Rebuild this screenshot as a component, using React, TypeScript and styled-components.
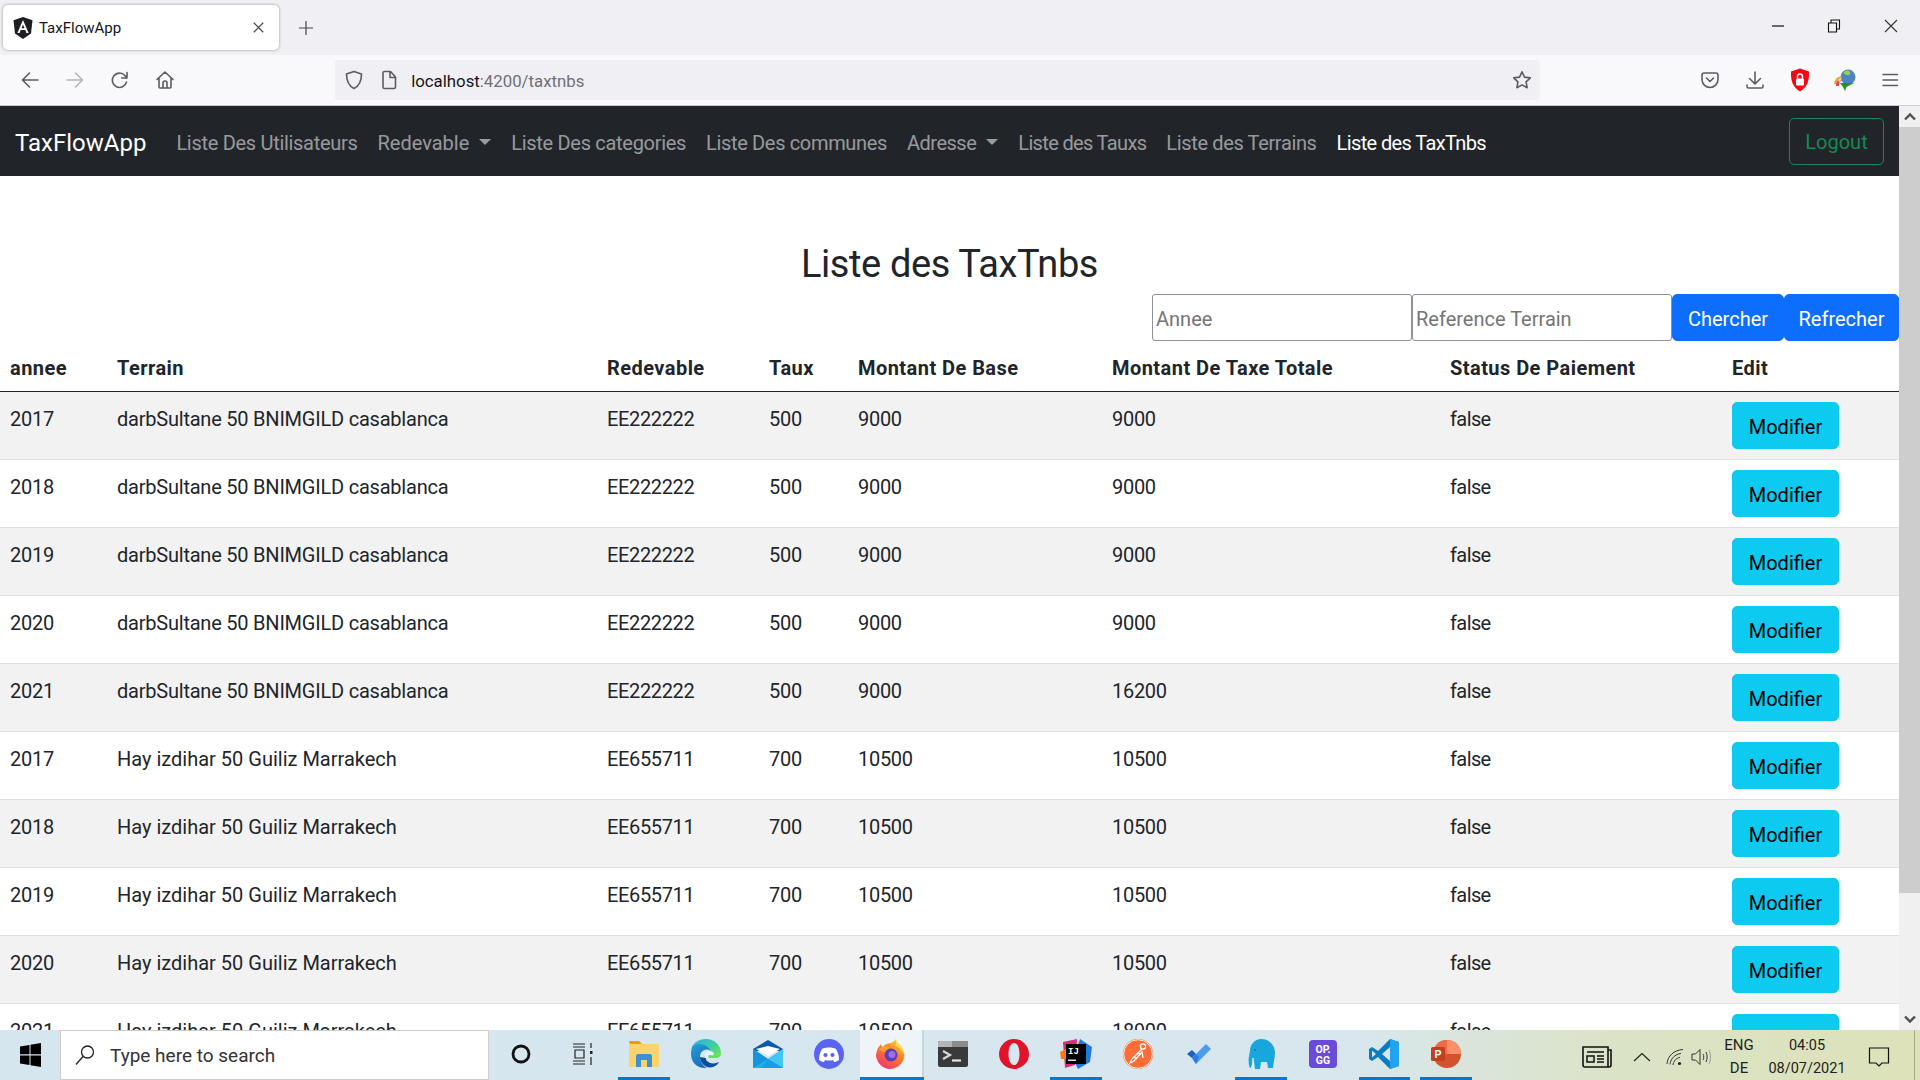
import React from "react";
import styled, { createGlobalStyle } from "styled-components";

const Global = createGlobalStyle`
  html, body { margin: 0; padding: 0; height: 100%; overflow: hidden; background: #fff; }
  body { font-family: Roboto, "Open Sans", "Liberation Sans", sans-serif; color: #212529; }
  * { box-sizing: border-box; }
`;

const Screen = styled.div`
  width: 1920px; height: 1080px; display: flex; flex-direction: column; overflow: hidden;
`;
const TabStrip = styled.div`
  height: 55px; flex: none; background: #f0f0f4; display: flex; align-items: flex-start; padding: 5px 0 0 3px;
`;
const Tab = styled.div`
  width: 276px; height: 45px; background: #fff; border-radius: 5px; box-shadow: 0 0 3px rgba(0,0,0,.4);
  display: flex; align-items: center; padding: 0 15px 0 10px; gap: 6px; font-size: 15px; color: #15141a;
`;
const TabTitle = styled.span` flex: 1; `;
const NewTab = styled.div`
  width: 36px; height: 45px; margin-left: 9px; display: flex; align-items: center; justify-content: center;
`;
const WindowControls = styled.div` margin-left: auto; display: flex; margin-top: -5px; margin-right: 1px; `;
const WindowButton = styled.div`
  width: 56.5px; height: 52px; display: flex; align-items: center; justify-content: center;
`;
const Toolbar = styled.div`
  height: 51px; flex: none; background: #f9f9fb; border-bottom: 1px solid #ccc; display: flex; align-items: center; padding: 0 8px 1px;
`;
const ToolGroup = styled.div` display: flex; `;
const ToolButton = styled.div`
  width: 44.8px; height: 40px; display: flex; align-items: center; justify-content: center;
`;
const UrlBar = styled.div`
  width: 1206px; height: 40px; margin: 0 148px; background: #f0f0f4; border-radius: 4px;
  display: flex; align-items: center; padding: 0 8px 0 9px; font-size: 16.8px;
`;
const UrlIcon = styled.div` width: 20px; height: 20px; margin-right: 15px; display: flex; `;
const UrlText = styled.div` flex: 1; margin-left: -3px; padding-top: 2px; color: #15141a; `;
const UrlDim = styled.span` color: #6f6f76; `;

const Body = styled.div` flex: 1; min-height: 0; display: flex; `;
const Page = styled.div` flex: 1; min-width: 0; overflow: hidden; `;
const Navbar = styled.nav`
  height: 70px; background: #212529; display: flex; align-items: center; padding: 0 15px;
`;
const Brand = styled.div` font-size: 24px; color: #fff; margin-right: 20px; padding-top: 3px; `;
const NavLink = styled.div<{ $active?: boolean; $ls: number }>`
  font-size: 20px; padding: 3px 10px 0; white-space: nowrap; letter-spacing: ${p => p.$ls}px;
  color: ${p => (p.$active ? "#fff" : "rgba(255,255,255,.55)")};
`;
const Caret = styled.span`
  display: inline-block; margin-left: 10px; vertical-align: 5px;
  border-top: 6px solid rgba(255,255,255,.55); border-left: 6px solid transparent; border-right: 6px solid transparent;
`;
const Logout = styled.button`
  margin-left: auto; height: 47px; width: 95px; background: transparent; border: 1px solid #198754; border-radius: 5px;
  color: #198754; font: inherit; font-size: 20px; padding: 2px 0 0;
`;
const Title = styled.h1`
  margin: 0; padding-top: 64px; height: 118px; text-align: center; font-size: 38px; font-weight: 400; line-height: 48px; letter-spacing: -0.4px;
`;
const SearchForm = styled.form` display: flex; justify-content: flex-end; `;
const SearchInput = styled.input`
  width: 260px; height: 47px; border: 1px solid #8f8f9d; border-radius: 3px; padding: 2px 3px 0;
  font: inherit; font-size: 20px; color: #212529; background: #fff;
  &::placeholder { color: #757575; opacity: 1; }
`;
const SearchButton = styled.button<{ $w: number }>`
  width: ${p => p.$w}px; height: 47px; background: #0d6efd; color: #fff; border: 1px solid #0d6efd; border-radius: 5px;
  font: inherit; font-size: 20px; padding: 2px 0 0;
`;
const Table = styled.table`
  width: 1899px; table-layout: fixed; border-collapse: separate; border-spacing: 0;
`;
const Col = styled.col<{ $w: number }>` width: ${p => p.$w}px; `;
const Th = styled.th`
  height: 51px; padding: 12px 10px 8px; font-size: 20px; line-height: 30px; font-weight: 700; text-align: left; vertical-align: bottom;
  border-bottom: 1px solid #212529; color: #212529; letter-spacing: 0.45px;
`;
const Row = styled.tr<{ $odd: boolean }>`
  background: ${p => (p.$odd ? "#f2f2f2" : "#fff")};
`;
const Td = styled.td<{ $ls: number }>`
  padding: 12px 10px 8px; font-size: 20px; line-height: 30px; vertical-align: top; border-bottom: 1px solid #dee2e6; color: #212529;
  white-space: nowrap; letter-spacing: ${p => p.$ls}px;
`;
const EditCell = styled.td`
  padding: 10px; vertical-align: top; border-bottom: 1px solid #dee2e6;
`;
const EditButton = styled.button`
  display: block; width: 107px; height: 47px; background: #0dcaf0; border: 1px solid #0dcaf0; border-radius: 5px;
  color: #000; font: inherit; font-size: 20px; padding: 2px 0 0;
`;
const Scrollbar = styled.div` width: 21px; flex: none; background: #f0f0f0; display: flex; flex-direction: column; `;
const ScrollArrow = styled.div`
  height: 21px; flex: none; display: flex; align-items: center; justify-content: center;
`;
const ScrollThumb = styled.div` height: 766px; background: #cdcdcd; flex: none; `;
const ScrollTrack = styled.div` flex: 1; `;

const Taskbar = styled.div`
  height: 50px; flex: none; display: flex; align-items: stretch;
  background: linear-gradient(90deg, #d6e6ee 0%, #d8e7ee 70%, #dbe3c6 84%, #dde2b9 100%);
`;
const StartButton = styled.div` width: 60px; display: flex; align-items: center; justify-content: center; `;
const SearchBox = styled.div`
  width: 429px; background: #fff; border: 1px solid #ccc; display: flex; align-items: center;
  padding-left: 14px; gap: 15px; font-size: 19px; color: #333;
`;
const Apps = styled.div` display: flex; padding-left: 1px; `;
const AppButton = styled.div<{ $open?: boolean; $active?: boolean }>`
  width: 61.7px; display: flex; align-items: center; justify-content: center; padding-bottom: 2px; position: relative;
  background: ${p => (p.$active ? "#eef4f7" : "transparent")};
  &::before {
    content: ""; position: absolute; top: 0; bottom: 0; right: -2px; width: 2px; background: #c5d8e2;
    display: ${p => (p.$active ? "block" : "none")};
  }
  &::after {
    content: ""; position: absolute; bottom: 0; height: 3px; background: #0078d4;
    left: ${p => (p.$active ? "0" : "5px")}; right: ${p => (p.$active ? "-2px" : "5px")};
    display: ${p => (p.$open || p.$active ? "block" : "none")};
  }
`;
const TraySpacer = styled.div` flex: 1; `;
const TrayItem = styled.div<{ $w: number; $size?: number }>`
  width: ${p => p.$w}px; display: flex; flex-direction: column; align-items: center; justify-content: center;
  font-size: ${p => p.$size ?? 15}px; line-height: 23px; color: #222; padding-top: 3px;
`;
const ShowDesktop = styled.div`
  width: 15px; position: relative;
  &::before { content: ""; position: absolute; left: 9px; top: 0; bottom: 0; width: 1px; background: #a8a88e; }
`;

const st = { fill: "none", stroke: "#5b5b66", strokeWidth: 1.6, strokeLinecap: "round", strokeLinejoin: "round" } as const;

const AngularIcon = () => (
  <svg width="20" height="22" viewBox="0 0 20 22">
    <path d="M10 0 19.5 3.3 18 16.5 10 22 2 16.5.5 3.3Z" fill="#1d1d22" />
    <path d="M10 3 4.4 16h2.2l1.1-2.9h4.6l1.1 2.9h2.2ZM8.5 11.2 10 7.4l1.5 3.8Z" fill="#fff" />
  </svg>
);
const Back = () => (
  <svg width="20" height="20" viewBox="0 0 20 20"><path d="M18 10H2.5M9.5 3 2.500 10l7 7" {...st} /></svg>
);
const Forward = () => (
  <svg width="20" height="20" viewBox="0 0 20 20"><path d="M2 10h15.500M10.500 3l7 7-7 7" {...st} stroke="#b4b4ba" /></svg>
);
const Reload = () => (
  <svg width="20" height="20" viewBox="0 0 20 20"><path d="M16.500 12a7.200 7.200 0 1 1-1.600-6.500L17 8M17 2.500V8h-5.200" {...st} /></svg>
);
const Home = () => (
  <svg width="20" height="20" viewBox="0 0 20 20"><path d="M2 9.500 10 2l8 7.500M4 8v9a1 1 0 0 0 1 1h10a1 1 0 0 0 1-1V8M8 18v-5a2 2 0 0 1 4 0v5" {...st} /></svg>
);
const Shield = () => (
  <svg width="20" height="20" viewBox="0 0 20 20"><path d="M10 1.500 17.500 4c0 7-1.500 11.500-7.500 14.500C4 15.500 2.500 11 2.500 4Z" {...st} /></svg>
);
const PageIcon = () => (
  <svg width="20" height="20" viewBox="0 0 20 20"><path d="M4 3a1.500 1.500 0 0 1 1.500-1.500h6L16.500 7v10a1.500 1.500 0 0 1-1.500 1.500H5.500A1.500 1.500 0 0 1 4 17ZM11 2v5.500h5.500" {...st} /></svg>
);
const Star = () => (
  <svg width="20" height="20" viewBox="0 0 20 20"><path d="m10 1.800 2.500 5.300 5.800.8-4.200 4 1 5.800-5.100-2.800-5.100 2.800 1-5.800-4.200-4 5.800-.8Z" {...st} /></svg>
);
const Pocket = () => (
  <svg width="20" height="20" viewBox="0 0 20 20"><path d="M2 5a2 2 0 0 1 2-2h12a2 2 0 0 1 2 2v4.500a8 8 0 0 1-16 0ZM6.500 8l3.500 3.500L13.500 8" {...st} /></svg>
);
const Download = () => (
  <svg width="20" height="20" viewBox="0 0 20 20"><path d="M10 2v12M4.500 8.500 10 14l5.500-5.500M2 15v1.500a1.500 1.500 0 0 0 1.500 1.500h13a1.500 1.500 0 0 0 1.500-1.500V15" {...st} /></svg>
);
const RedShield = () => (
  <svg width="20" height="24" viewBox="0 0 20 24">
    <path d="M10 .5 19 3.500c.4 9-1.500 15.500-9 20C2.500 19 .6 12.500 1 3.500Z" fill="#ef0a16" />
    <rect x="6" y="10.500" width="8" height="7" rx="1" fill="#fff" />
    <path d="M7.500 10.500V8.500a2.500 2.500 0 0 1 5 0v2" fill="none" stroke="#fff" strokeWidth="1.400" />
  </svg>
);
const Idm = () => (
  <svg width="22" height="22" viewBox="0 0 22 22">
    <circle cx="14" cy="8" r="7.500" fill="#4a86bd" />
    <path d="M10 3c2-2 5-2 6 0s-1 4-3 3-4-1-3-3Z" fill="#9ccc5a" />
    <path d="M0 15c1-6 5-9 9-7-3 0-5 3-4.500 7Z" fill="#e8a23a" />
    <path d="M2 17c0-4 3-7 6-6-2 1-3 3-3 6Z" fill="#d94a4a" />
    <path d="M4 11c1-1 2-2 4-2-1 1-2 3-2 5Z" fill="#f4e36a" />
    <path d="M6 14h14l-7.500 4-1.500 4-2-4Z" fill="#2f8f25" />
  </svg>
);
const Menu = () => (
  <svg width="20" height="20" viewBox="0 0 20 20"><path d="M3 4.500h14.500M3 10h14.500M3 15.500h14.500" {...st} /></svg>
);
const Close = ({ s = 14, c = "#333", w = 1.1 }: { s?: number; c?: string; w?: number }) => (
  <svg width={s} height={s} viewBox="0 0 14 14"><path d="m1 1 12 12M13 1 1 13" fill="none" stroke={c} strokeWidth={w} /></svg>
);
const Plus = () => (
  <svg width="16" height="16" viewBox="0 0 16 16"><path d="M8 1v14M1 8h14" fill="none" stroke="#45454d" strokeWidth="1.200" /></svg>
);
const Minimize = () => (
  <svg width="14" height="14" viewBox="0 0 14 14"><path d="M1 7h12" stroke="#111" strokeWidth="1.200" /></svg>
);
const Restore = () => (
  <svg width="14" height="14" viewBox="0 0 14 14"><path d="M1.500 4h8v9h-8ZM4 4V1h8.500v9H9.500" fill="none" stroke="#111" strokeWidth="1.100" /></svg>
);
const Chevron = ({ up }: { up?: boolean }) => (
  <svg width="12" height="9" viewBox="0 0 12 9">
    <path d={up ? "M1 7.500 6 2.500l5 5" : "M1 1.500l5 5 5-5"} fill="none" stroke="#505050" strokeWidth="2.400" />
  </svg>
);

const WinLogo = () => (
  <svg width="21" height="24" viewBox="0 0 21 24"><path d="M0 3.500 9.500 2v9.300H0ZM10.500 1.800 21 0v11.300H10.500ZM0 12.500h9.500V22L0 20.500ZM10.500 12.500H21V24l-10.500-1.800Z" fill="#000" /></svg>
);
const SearchGlass = () => (
  <svg width="20" height="22" viewBox="0 0 20 22"><circle cx="12.500" cy="8" r="6" fill="none" stroke="#222" strokeWidth="1.300" /><path d="M8 12.500 1 20.500" stroke="#222" strokeWidth="1.400" /></svg>
);
const Cortana = () => (
  <svg width="22" height="22" viewBox="0 0 22 22"><circle cx="11" cy="11" r="8" fill="none" stroke="#111" strokeWidth="2.800" /></svg>
);
const TaskView = () => (
  <svg width="22" height="24" viewBox="0 0 22 24" fill="none" stroke="#222" strokeWidth="1.200">
    <path d="M1 2h12M1 5h12M3 8h9v8H3ZM1 19h12M1 22h12" />
    <rect x="18" y="9" width="2.500" height="3" fill="#222" stroke="none" />
    <path d="M19 1v5M19 15v8" />
  </svg>
);
const FolderApp = () => (
  <svg width="30" height="28" viewBox="0 0 30 28">
    <path d="M0 2a1 1 0 0 1 1-1h9l3 3H1Z" fill="#e0a100" />
    <path d="M0 4h29a1 1 0 0 1 1 1v21a1 1 0 0 1-1 1H1a1 1 0 0 1-1-1Z" fill="#fcd36a" />
    <path d="M7 27V16a2 2 0 0 1 2-2h12a2 2 0 0 1 2 2v11h-5v-7h-6v7Z" fill="#3d8fd1" />
  </svg>
);
const EdgeApp = () => (
  <svg width="30" height="30" viewBox="0 0 30 30">
    <defs>
      <linearGradient id="edgeA" x1="0.200" y1="0" x2="1" y2="0.700"><stop offset="0" stopColor="#2fb4dc" /><stop offset=".6" stopColor="#3ecfa0" /><stop offset="1" stopColor="#6be05a" /></linearGradient>
      <linearGradient id="edgeB" x1="0" y1="0" x2="0.600" y2="1"><stop offset="0" stopColor="#27a0d8" /><stop offset="1" stopColor="#1668b8" /></linearGradient>
    </defs>
    <path d="M15 0C23 0 30 6 30 14c0 3-2 5-5 5h-7l-2-5h3c0-4-4-6-8-5C6 10 2 9 1 8 3 3 9 0 15 0Z" fill="url(#edgeA)" />
    <path d="M1 8c3-3 8-4 12-2 3 1 5 3 6 5-5-2-10 1-10 7 0 5 3 9 7 11C7 30 0 24 0 15c0-2 .3-5 1-7Z" fill="url(#edgeB)" />
    <path d="M9 18c0 7 7 12 13 10 3-1 5-3 6-5-4 2-9 2-12-1-1-1-1-2-1-3Z" fill="#0c4f9e" />
    <path d="M14 18c0-4 2-6 5-6 2 0 4 1 4 3s-3 1-4 1c-2 0-3 2-2 4-1 0-3-1-3-2Z" fill="#e4f1f6" />
  </svg>
);
const MailApp = () => (
  <svg width="30" height="28" viewBox="0 0 30 28">
    <path d="M0 9 15 0l15 9v2H0Z" fill="#0b5aa8" />
    <path d="M3 9 15 6l12 3-12 7Z" fill="#fff" />
    <path d="M0 9 15 19 30 9v19H0Z" fill="#23b1ec" />
    <path d="M0 28V9l15 10Z" fill="#1494dc" />
    <path d="M30 28V9L15 19l-8 9Z" fill="#43c6f4" />
    <path d="M7 28l8-9 15 9Z" fill="#1a9de2" />
  </svg>
);
const DiscordApp = () => (
  <svg width="30" height="30" viewBox="0 0 30 30">
    <circle cx="15" cy="15" r="15" fill="#5865f2" />
    <path d="M8 10c3-2 11-2 14 0 2 3 3 7 3 11-2 1-3 2-5 2l-1-2c-2 .8-6 .8-8 0l-1 2c-2 0-3-1-5-2 0-4 1-8 3-11Z" fill="#fff" />
    <circle cx="11.500" cy="16" r="2.100" fill="#5865f2" /><circle cx="18.500" cy="16" r="2.100" fill="#5865f2" />
  </svg>
);
const FirefoxApp = () => (
  <svg width="30" height="30" viewBox="0 0 30 30">
    <defs>
      <linearGradient id="ffA" x1="0.800" y1="0" x2="0.200" y2="1"><stop offset="0" stopColor="#ffd43a" /><stop offset=".45" stopColor="#ff7a1f" /><stop offset="1" stopColor="#f0317c" /></linearGradient>
    </defs>
    <path d="M2 9 5 5c0 2 1 3 2 3 2-3 5-4 8-4 3-1 4-3 5-4 0 3 2 4 5 7 3 4 4 9 3 12-2 7-8 11-14 11C7 30 1 24 0 17c0-3 1-6 2-8Z" fill="url(#ffA)" />
    <path d="M20 0c0 3 2 5 5 7 2 3 3 5 3 8-2-4-5-7-9-8 1-2 1-5 1-7Z" fill="#ffdf50" />
    <circle cx="15" cy="16" r="6.500" fill="#5b3fb5" />
    <circle cx="16" cy="15.500" r="3.500" fill="#9a6fe8" />
    <path d="M3 10c3-3 9-3 11-1-2 0-4 2-5 4-2 0-5-1-6-3Z" fill="#ffa02e" />
  </svg>
);
const TerminalApp = () => (
  <svg width="30" height="26" viewBox="0 0 30 26">
    <rect width="30" height="26" rx="2" fill="#3a3a3a" />
    <path d="M0 2a2 2 0 0 1 2-2h12v6H0Z" fill="#b5b5b5" />
    <path d="M14 0h14a2 2 0 0 1 2 2v4H14Z" fill="#8b8b8b" />
    <path d="m5 10 7 4-7 4" fill="none" stroke="#d9d9d9" strokeWidth="2.200" />
    <path d="M14 19.500h9" stroke="#e5e5e5" strokeWidth="2.200" />
  </svg>
);
const OperaApp = () => (
  <svg width="30" height="30" viewBox="0 0 30 30">
    <path fillRule="evenodd" d="M15 0a15 15 0 1 0 0 30 15 15 0 0 0 0-30Zm0 4c3.500 0 5.500 5 5.500 11S18.500 26 15 26s-5.500-5-5.500-11S11.500 4 15 4Z" fill="#e0132b" />
  </svg>
);
const IdeaApp = () => (
  <svg width="32" height="30" viewBox="0 0 32 30">
    <path d="M3 3 17 0l-2 26L5 29Z" fill="#dd2a7b" />
    <path d="M20 0l12 8-2 15-12 7-5-10Z" fill="#1f7ae0" />
    <path d="M0 13l6-3v10H1Z" fill="#f97a12" />
    <rect x="6" y="5" width="20" height="20" fill="#000" />
    <text x="8" y="15" fontSize="9" fontWeight="700" fill="#fff" fontFamily="'Liberation Mono', monospace">IJ</text>
    <rect x="8" y="20.500" width="8" height="1.500" fill="#ddd" />
  </svg>
);
const PostmanApp = () => (
  <svg width="30" height="30" viewBox="0 0 30 30">
    <circle cx="15" cy="15" r="15" fill="#ff6c37" />
    <circle cx="15" cy="15" r="14.300" fill="none" stroke="#ffe8dc" strokeWidth="1" />
    <circle cx="20" cy="7.500" r="2.600" fill="none" stroke="#fff" strokeWidth="1.300" />
    <path d="M19 10 9 20l-2 4 4-2 8-9 1 6M14 14l4 1M11 18l3 2" fill="none" stroke="#fff" strokeWidth="1.300" />
  </svg>
);
const TodoApp = () => (
  <svg width="24" height="20" viewBox="0 0 24 20">
    <path d="M0 10 5 6l4 4-4 4Z" fill="#1d5fc0" />
    <path d="M5 14 19 0l5 5L9 20Z" fill="#4c9bef" />
    <path d="M5 14l4-4 3 3-3 7Z" fill="#2f7be0" />
  </svg>
);
const MysqlApp = () => (
  <svg width="28" height="30" viewBox="0 0 28 30">
    <path d="M3 12C3 5 8 0 14 0c8 0 14 6 14 14 0 6-2 10-2 15h-5l-1-6h-6l-1 7H8l-1-8c-2 2-3 6-3 7 -1 0-2-1-2-3-1-5 0-9 1-14Z" fill="#18a6dc" />
    <path d="M6 19v8" stroke="#dff3fb" strokeWidth="1.500" />
    <circle cx="8" cy="11" r="1" fill="#0d6f97" />
  </svg>
);
const OpggApp = () => (
  <svg width="28" height="28" viewBox="0 0 28 28">
    <rect width="28" height="28" rx="4" fill="#6a4bd8" />
    <text x="14" y="13" textAnchor="middle" fontSize="10.500" fontWeight="700" fill="#fff" fontFamily="Roboto, sans-serif">OP.</text>
    <text x="14" y="24" textAnchor="middle" fontSize="10.500" fontWeight="700" fill="#fff" fontFamily="Roboto, sans-serif">GG</text>
  </svg>
);
const VsCodeApp = () => (
  <svg width="30" height="30" viewBox="0 0 30 30">
    <path d="M21 0 9 12 3 8 0 10v10l3 2 6-4 12 12 9-3V3Z" fill="#0a7cc2" />
    <path d="M21 0l9 3v24l-9 3Z" fill="#22a3ee" />
    <path d="M21 8v14l-8-7Z" fill="#d8e7ee" />
    <path d="M3 11.500v7l4-3.500Z" fill="#d8e7ee" />
  </svg>
);
const PptApp = () => (
  <svg width="30" height="28" viewBox="0 0 30 28">
    <circle cx="16" cy="14" r="14" fill="#d35230" />
    <path d="M16 0a14 14 0 0 1 14 14H16Z" fill="#ff8f6b" />
    <path d="M2 14a14 14 0 0 1 14-14v14Z" fill="#ed6c47" />
    <rect y="7" width="14" height="14" rx="1.500" fill="#c43e1c" />
    <text x="7" y="18" textAnchor="middle" fontSize="11" fontWeight="700" fill="#fff" fontFamily="Roboto, sans-serif">P</text>
  </svg>
);
const NewsIcon = () => (
  <svg width="30" height="22" viewBox="0 0 30 22" fill="none" stroke="#111" strokeWidth="1.600">
    <path d="M1 1h25v20H3a2 2 0 0 1-2-2ZM26 4h3v15a2 2 0 0 1-2 2h-1" />
    <path d="M5 6h17M5 10h7v6H5ZM15 10h7M15 13h7M15 16h7" strokeWidth="1.500" />
  </svg>
);
const TrayChevron = () => (
  <svg width="18" height="10" viewBox="0 0 18 10"><path d="M1 9 9 1.500 17 9" fill="none" stroke="#222" strokeWidth="1.200" /></svg>
);
const Wifi = () => (
  <svg width="18" height="18" viewBox="0 0 18 18" fill="none" stroke="#333" strokeWidth="1">
    <path d="M1 16C1.500 8 8 2 17 1.500M4 16.500C4.500 11 9 6 15 5.500M7 17c.5-3.500 3-7 7-7.500" />
    <circle cx="13.500" cy="15.500" r="1.600" fill="#222" stroke="none" />
  </svg>
);
const Speaker = () => (
  <svg width="22" height="18" viewBox="0 0 22 18" fill="none" stroke="#333" strokeWidth="1">
    <path d="M1 6h3.500L9 1.500v15L4.500 12H1Z" />
    <path d="M12 6c1 2 1 4 0 6M15 4c1.500 3 1.500 7 0 10" />
    <path d="M18 2c2 4 2 10 0 14" stroke="#999" />
  </svg>
);
const Notify = () => (
  <svg width="22" height="22" viewBox="0 0 22 22"><path d="M1.500 2h19v15H14l-3 3-3-3H1.500Z" fill="none" stroke="#111" strokeWidth="1.200" /></svg>
);

const navLinks: { label: string; ls: number; caret?: boolean; active?: boolean }[] = [
  { label: "Liste Des Utilisateurs", ls: -0.3 },
  { label: "Redevable", ls: 0, caret: true },
  { label: "Liste Des categories", ls: -0.3 },
  { label: "Liste Des communes", ls: -0.34 },
  { label: "Adresse", ls: -0.5, caret: true },
  { label: "Liste des Tauxs", ls: -0.65 },
  { label: "Liste des Terrains", ls: -0.36 },
  { label: "Liste des TaxTnbs", ls: -0.62, active: true },
];
const colWidths = [107, 490, 162, 89, 254, 338, 282, 177];
const colSpacing = [-0.2, 0, -0.35, -0.3, -0.3, -0.3];
const headers = ["annee", "Terrain", "Redevable", "Taux", "Montant De Base", "Montant De Taxe Totale", "Status De Paiement", "Edit"];
const rows = [
  ["2017", "darbSultane 50 BNIMGILD casablanca", "EE222222", "500", "9000", "9000"],
  ["2018", "darbSultane 50 BNIMGILD casablanca", "EE222222", "500", "9000", "9000"],
  ["2019", "darbSultane 50 BNIMGILD casablanca", "EE222222", "500", "9000", "9000"],
  ["2020", "darbSultane 50 BNIMGILD casablanca", "EE222222", "500", "9000", "9000"],
  ["2021", "darbSultane 50 BNIMGILD casablanca", "EE222222", "500", "9000", "16200"],
  ["2017", "Hay izdihar 50 Guiliz Marrakech", "EE655711", "700", "10500", "10500"],
  ["2018", "Hay izdihar 50 Guiliz Marrakech", "EE655711", "700", "10500", "10500"],
  ["2019", "Hay izdihar 50 Guiliz Marrakech", "EE655711", "700", "10500", "10500"],
  ["2020", "Hay izdihar 50 Guiliz Marrakech", "EE655711", "700", "10500", "10500"],
  ["2021", "Hay izdihar 50 Guiliz Marrakech", "EE655711", "700", "10500", "18900"],
];
const apps: { icon: React.ReactNode; open?: boolean; active?: boolean }[] = [
  { icon: <Cortana /> },
  { icon: <TaskView /> },
  { icon: <FolderApp />, open: true },
  { icon: <EdgeApp /> },
  { icon: <MailApp /> },
  { icon: <DiscordApp /> },
  { icon: <FirefoxApp />, active: true },
  { icon: <TerminalApp /> },
  { icon: <OperaApp /> },
  { icon: <IdeaApp />, open: true },
  { icon: <PostmanApp /> },
  { icon: <TodoApp /> },
  { icon: <MysqlApp />, open: true },
  { icon: <OpggApp /> },
  { icon: <VsCodeApp />, open: true },
  { icon: <PptApp />, open: true },
];

const cellSpacing = (value: string, column: number) =>
  column === 1 ? (value.startsWith("darb") ? -0.22 : 0) : colSpacing[column];

export default function App() {
  return (
    <Screen>
      <Global />
      <TabStrip>
        <Tab>
          <AngularIcon />
          <TabTitle>TaxFlowApp</TabTitle>
          <Close s={11} c="#45454d" w={1.5} />
        </Tab>
        <NewTab><Plus /></NewTab>
        <WindowControls>
          <WindowButton><Minimize /></WindowButton>
          <WindowButton><Restore /></WindowButton>
          <WindowButton><Close /></WindowButton>
        </WindowControls>
      </TabStrip>
      <Toolbar>
        <ToolGroup>
          <ToolButton><Back /></ToolButton>
          <ToolButton><Forward /></ToolButton>
          <ToolButton><Reload /></ToolButton>
          <ToolButton><Home /></ToolButton>
        </ToolGroup>
        <UrlBar>
          <UrlIcon><Shield /></UrlIcon>
          <UrlIcon><PageIcon /></UrlIcon>
          <UrlText>localhost<UrlDim>:4200/taxtnbs</UrlDim></UrlText>
          <Star />
        </UrlBar>
        <ToolGroup>
          <ToolButton><Pocket /></ToolButton>
          <ToolButton><Download /></ToolButton>
          <ToolButton><RedShield /></ToolButton>
          <ToolButton><Idm /></ToolButton>
          <ToolButton><Menu /></ToolButton>
        </ToolGroup>
      </Toolbar>
      <Body>
        <Page>
          <Navbar>
            <Brand>TaxFlowApp</Brand>
            {navLinks.map(l => (
              <NavLink key={l.label} $active={l.active} $ls={l.ls}>
                {l.label}{l.caret && <Caret />}
              </NavLink>
            ))}
            <Logout type="button">Logout</Logout>
          </Navbar>
          <Title>Liste des TaxTnbs</Title>
          <SearchForm>
            <SearchInput placeholder="Annee" />
            <SearchInput placeholder="Reference Terrain" />
            <SearchButton type="button" $w={112}>Chercher</SearchButton>
            <SearchButton type="button" $w={115}>Refrecher</SearchButton>
          </SearchForm>
          <Table>
            <colgroup>
              {colWidths.map((w, i) => <Col key={i} $w={w} />)}
            </colgroup>
            <thead>
              <tr>{headers.map(h => <Th key={h}>{h}</Th>)}</tr>
            </thead>
            <tbody>
              {rows.map((r, i) => (
                <Row key={i} $odd={i % 2 === 0}>
                  {r.map((c, j) => <Td key={j} $ls={cellSpacing(c, j)}>{c}</Td>)}
                  <Td $ls={-0.6}>false</Td>
                  <EditCell><EditButton type="button">Modifier</EditButton></EditCell>
                </Row>
              ))}
            </tbody>
          </Table>
        </Page>
        <Scrollbar>
          <ScrollArrow><Chevron up /></ScrollArrow>
          <ScrollThumb />
          <ScrollTrack />
          <ScrollArrow><Chevron /></ScrollArrow>
        </Scrollbar>
      </Body>
      <Taskbar>
        <StartButton><WinLogo /></StartButton>
        <SearchBox><SearchGlass />Type here to search</SearchBox>
        <Apps>
          {apps.map((a, i) => (
            <AppButton key={i} $open={a.open} $active={a.active}>{a.icon}</AppButton>
          ))}
        </Apps>
        <TraySpacer />
        <TrayItem $w={50}><NewsIcon /></TrayItem>
        <TrayItem $w={40}><TrayChevron /></TrayItem>
        <TrayItem $w={25}><Wifi /></TrayItem>
        <TrayItem $w={30}><Speaker /></TrayItem>
        <TrayItem $w={44}><span>ENG</span><span>DE</span></TrayItem>
        <TrayItem $w={92} $size={14.5}><span>04:05</span><span>08/07/2021</span></TrayItem>
        <TrayItem $w={52}><Notify /></TrayItem>
        <ShowDesktop />
      </Taskbar>
    </Screen>
  );
}
